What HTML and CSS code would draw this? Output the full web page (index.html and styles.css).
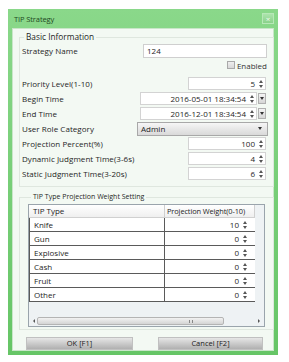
FILE: index.html
```html
<!DOCTYPE html>
<html>
<head>
<meta charset="utf-8">
<link rel="stylesheet" href="styles.css">
</head>
<body>
<div class="window">
  <div class="titlebar">
    <span class="title">TIP Strategy</span>
    <span class="close">×</span>
  </div>
  <div class="panel">
    <fieldset class="group basic">
      <legend>Basic Information</legend>
      <div class="row r-name">
        <span class="label">Strategy Name</span>
        <div class="text-input">124</div>
      </div>
      <div class="row r-enabled">
        <span class="check"></span><span class="check-label">Enabled</span>
      </div>
      <div class="row r-first">
        <span class="label">Priority Level(1-10)</span>
        <div class="spin"><span class="val">5</span><span class="arrows"><i class="up"></i><i class="down"></i></span></div>
      </div>
      <div class="row">
        <span class="label">Begin Time</span>
        <div class="date">
          <div class="spin wide"><span class="val">2016-05-01 18:34:54</span><span class="arrows"><i class="up"></i><i class="down"></i></span></div>
          <span class="drop"><i class="tri"></i></span>
        </div>
      </div>
      <div class="row">
        <span class="label">End Time</span>
        <div class="date">
          <div class="spin wide"><span class="val">2016-12-01 18:34:54</span><span class="arrows"><i class="up"></i><i class="down"></i></span></div>
          <span class="drop"><i class="tri"></i></span>
        </div>
      </div>
      <div class="row">
        <span class="label">User Role Category</span>
        <div class="combo"><span>Admin</span><i class="tri"></i></div>
      </div>
      <div class="row">
        <span class="label">Projection Percent(%)</span>
        <div class="spin"><span class="val">100</span><span class="arrows"><i class="up"></i><i class="down"></i></span></div>
      </div>
      <div class="row">
        <span class="label">Dynamic Judgment Time(3-6s)</span>
        <div class="spin"><span class="val">4</span><span class="arrows"><i class="up"></i><i class="down"></i></span></div>
      </div>
      <div class="row">
        <span class="label">Static Judgment Time(3-20s)</span>
        <div class="spin"><span class="val">6</span><span class="arrows"><i class="up"></i><i class="down"></i></span></div>
      </div>
    </fieldset>

    <fieldset class="group weights">
      <legend>TIP Type Projection Weight Setting</legend>
      <div class="table">
        <div class="thead">
          <div class="c1">TIP Type</div>
          <div class="c2">Projection Weight(0-10)</div>
        </div>
        <div class="tr"><div class="c1">Knife</div><div class="c2"><div class="cell-spin"><span class="val">10</span><span class="arrows"><i class="up"></i><i class="down"></i></span></div></div></div>
        <div class="tr"><div class="c1">Gun</div><div class="c2"><div class="cell-spin"><span class="val">0</span><span class="arrows"><i class="up"></i><i class="down"></i></span></div></div></div>
        <div class="tr"><div class="c1">Explosive</div><div class="c2"><div class="cell-spin"><span class="val">0</span><span class="arrows"><i class="up"></i><i class="down"></i></span></div></div></div>
        <div class="tr"><div class="c1">Cash</div><div class="c2"><div class="cell-spin"><span class="val">0</span><span class="arrows"><i class="up"></i><i class="down"></i></span></div></div></div>
        <div class="tr"><div class="c1">Fruit</div><div class="c2"><div class="cell-spin"><span class="val">0</span><span class="arrows"><i class="up"></i><i class="down"></i></span></div></div></div>
        <div class="tr"><div class="c1">Other</div><div class="c2"><div class="cell-spin"><span class="val">0</span><span class="arrows"><i class="up"></i><i class="down"></i></span></div></div></div>
        <div class="filler"></div>
        <div class="hscroll">
          <span class="sarrow left"></span>
          <span class="thumb"><span class="grip"></span></span>
          <span class="sarrow right"></span>
        </div>
      </div>
    </fieldset>

    <div class="buttons">
      <div class="btn">OK [F1]</div>
      <div class="btn">Cancel [F2]</div>
    </div>
  </div>
</div>
</body>
</html>
```

FILE: styles.css
```css
* { box-sizing: border-box; }
html, body {
  margin: 0;
  padding: 0;
  background: #ffffff;
}
body {
  font-family: "Open Sans", "DejaVu Sans", sans-serif;
  font-size: 8px;
  color: #1e1e1e;
}
.window {
  margin: 9px 0 0 8px;
  width: 270px;
  height: 346px;
  background: linear-gradient(#8ad88a, #66c566);
  padding: 0 4px 4px 4px;
  display: flex;
  flex-direction: column;
}
.titlebar {
  height: 20px;
  display: flex;
  align-items: center;
  justify-content: space-between;
  padding: 0 0 0 2px;
}
.title {
  color: #1f4a1f;
  font-size: 7.5px;
  letter-spacing: -0.1px;
}
.close {
  width: 12px;
  height: 11px;
  background: linear-gradient(#ace4ac, #8ad28a);
  border: 1px solid #b8e8b8;
  color: #eefaee;
  font-size: 8px;
  line-height: 9px;
  text-align: center;
}
.panel {
  flex: 1;
  background: #f3f9f3;
  border: 1px solid #c9e6c9;
  padding: 0 0 0 6px;
  display: flex;
  flex-direction: column;
}
.group {
  margin: 0;
  border: 1px solid #dfe7df;
  padding: 0;
  min-width: 0;
}
.group legend {
  padding: 0 2px;
  line-height: 10px;
  margin-left: 2px;
}
.basic {
  margin-top: 3px;
  width: 255px;
  padding: 0 0 5px 2px;
}
.basic legend {
  font-size: 8.3px;
}
.row {
  height: 15px;
  display: flex;
  align-items: center;
}
.r-name {
  margin-top: 1px;
}
.r-enabled {
  height: 14px;
  justify-content: flex-end;
  padding-right: 6px;
}
.r-first {
  margin-top: 4px;
}
.label {
  flex: 1;
  white-space: nowrap;
  letter-spacing: 0.05px;
}
.text-input {
  width: 124px;
  height: 14px;
  margin-right: 6px;
  background: #ffffff;
  border: 1px solid #cfcfcf;
  padding-left: 3px;
  line-height: 12px;
}
.check {
  width: 8px;
  height: 8px;
  border: 1px solid #a9a9a9;
  background: linear-gradient(#eeeeee, #d8d8d8);
  margin-right: 2px;
}
.check-label { color: #333; }
.spin {
  width: 78px;
  height: 13px;
  margin-right: 7px;
  background: #ffffff;
  border: 1px solid #d3d3d3;
  display: flex;
  align-items: center;
  justify-content: flex-end;
}
.spin .val {
  line-height: 11px;
  padding-right: 2px;
}
.spin.wide {
  width: 117px;
  margin-right: 1px;
}
.arrows {
  width: 8px;
  height: 11px;
  display: flex;
  flex-direction: column;
  align-items: center;
  justify-content: center;
  gap: 2px;
}
.up, .down {
  display: block;
  width: 0;
  height: 0;
  border-left: 2px solid transparent;
  border-right: 2px solid transparent;
}
.up { border-bottom: 3px solid #555; }
.down { border-top: 3px solid #555; }
.date {
  display: flex;
  align-items: center;
  margin-right: 7px;
}
.drop {
  width: 8px;
  height: 11px;
  border: 1px solid #b0b0b0;
  background: linear-gradient(#f4f4f4, #d6d6d6);
  display: flex;
  align-items: center;
  justify-content: center;
}
.tri {
  display: block;
  width: 0;
  height: 0;
  border-left: 2px solid transparent;
  border-right: 2px solid transparent;
  border-top: 3px solid #333;
}
.combo {
  width: 131px;
  height: 14px;
  margin-right: 5px;
  border: 1px solid #a8a8a8;
  background: linear-gradient(#f6f6f6, #d9d9d9);
  display: flex;
  align-items: center;
  justify-content: space-between;
  padding: 0 5px 0 3px;
}
.combo span { line-height: 12px; color: #222; }

.weights {
  margin-top: 5px;
  width: 255px;
  padding: 2px 7px 2px 8px;
}
.weights legend {
  font-size: 7px;
  line-height: 10px;
  margin-left: 3px;
}
.table {
  width: 237px;
  border: 1px solid #9aa4ac;
  background: #eef2f4;
  display: flex;
  flex-direction: column;
}
.thead, .tr {
  display: flex;
  width: 226px;
}
.thead {
  height: 13px;
  background: linear-gradient(#ffffff, #eeeeee);
}
.thead .c1, .thead .c2 {
  border-right: 1px solid #d0d0d0;
  border-bottom: 1px solid #d0d0d0;
  line-height: 12px;
  white-space: nowrap;
  overflow: hidden;
}
.thead .c2 {
  font-size: 7.4px;
  padding-left: 2px;
  letter-spacing: -0.1px;
}
.c1 {
  width: 136px;
  padding-left: 4px;
}
.c2 {
  width: 90px;
  padding-left: 3px;
}
.tr {
  height: 14px;
  background: #ffffff;
}
.tr .c1 {
  border-left: 1px solid #5a5a5a;
  border-bottom: 1px solid #5a5a5a;
  border-right: 1px solid #5a5a5a;
  line-height: 13px;
}
.tr .c2 {
  border-bottom: 1px solid #5a5a5a;
  padding: 0 6px 0 2px;
}
.cell-spin {
  height: 13px;
  background: #ffffff;
  display: flex;
  align-items: center;
  justify-content: flex-end;
}
.cell-spin .val { padding-right: 2px; line-height: 12px; }
.filler {
  height: 14px;
}
.hscroll {
  height: 10px;
  display: flex;
  align-items: center;
  padding: 0 4px;
  gap: 2px;
}
.sarrow {
  width: 0;
  height: 0;
  border-top: 2px solid transparent;
  border-bottom: 2px solid transparent;
}
.sarrow.left { border-right: 2px solid #555; }
.sarrow.right { border-left: 2px solid #555; margin-left: auto; }
.thumb {
  width: 187px;
  height: 8px;
  border: 1px solid #b4b4b4;
  border-radius: 2px;
  background: linear-gradient(#f2f2f2, #d4d4d4);
  display: flex;
  align-items: center;
  justify-content: flex-end;
  padding-right: 30px;
}
.grip {
  width: 4px;
  height: 3px;
  border-left: 1px solid #888;
  border-right: 1px solid #888;
}
.buttons {
  display: flex;
  gap: 25px;
  margin-top: 7px;
  padding-left: 7px;
}
.btn {
  width: 107px;
  height: 13px;
  background: linear-gradient(#e6e6e6, #b0b0b0);
  border: 1px solid #c0c0c0;
  text-align: center;
  line-height: 11px;
  font-size: 7.5px;
  color: #222;
}
.btn + .btn { width: 105px; }
```
